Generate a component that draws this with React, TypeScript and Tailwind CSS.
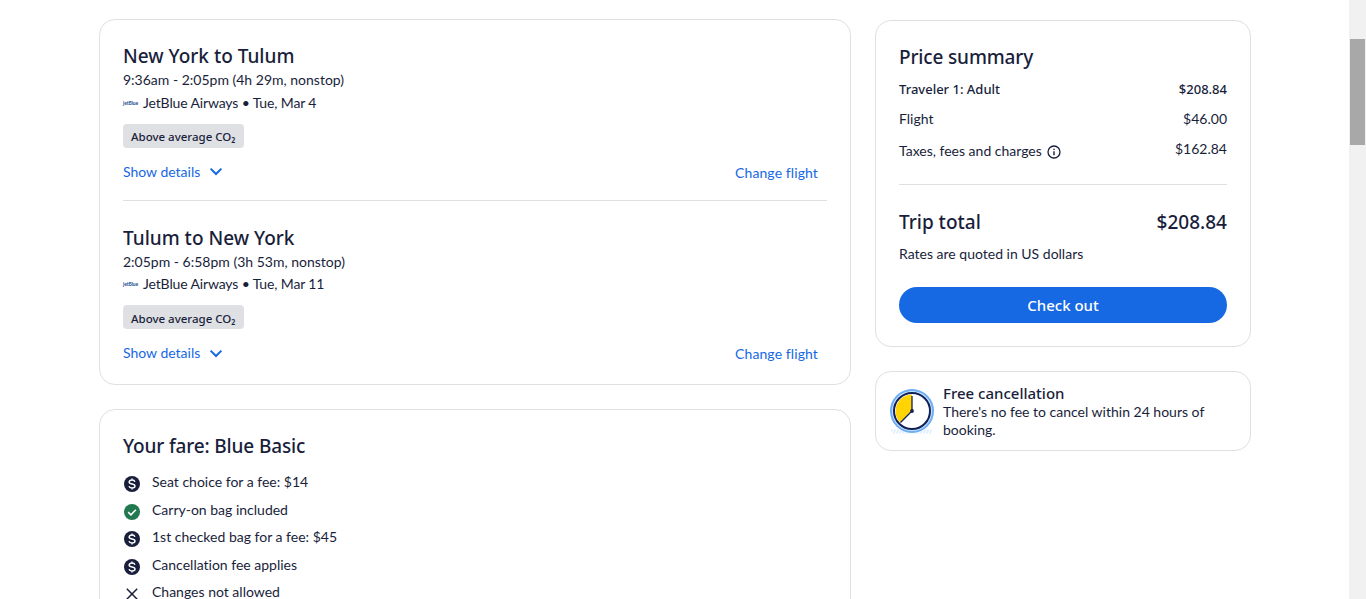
import React from "react";

const head = "font-['Noto_Sans',sans-serif] font-medium";

const Dollar = () => (
  <svg width="16" height="16" viewBox="0 0 16 16" className="shrink-0">
    <circle cx="8" cy="8" r="8" fill="#191e3b" />
    <path d="M10.9 5.9C10.6 4.6 9.4 4 8 4c-1.7 0-2.9.8-2.9 2 0 2.7 5.9 1.3 5.9 4 0 1.2-1.3 2-3 2-1.6 0-2.7-.7-3-1.9M8 2.4V4M8 12v1.6" fill="none" stroke="#fff" strokeWidth="1.4" />
  </svg>
);
const Check = () => (
  <svg width="16" height="16" viewBox="0 0 16 16" className="shrink-0">
    <circle cx="8" cy="8" r="8" fill="#227950" />
    <path d="M4.2 8.2l2.7 2.6 5-5" fill="none" stroke="#fff" strokeWidth="1.6" />
  </svg>
);
const Cross = () => (
  <svg width="16" height="16" viewBox="0 0 16 16" className="shrink-0">
    <path d="M2.8 2.8l10.4 10.4M13.2 2.8L2.8 13.2" fill="none" stroke="#191e3b" strokeWidth="1.5" />
  </svg>
);
const Chevron = () => (
  <svg width="14" height="9" viewBox="0 0 14 9" className="shrink-0">
    <path d="M1.6 1.6L7 7l5.4-5.4" fill="none" stroke="#1668e3" strokeWidth="2" />
  </svg>
);

function Flight(props: { title: string; time: string; date: string }) {
  return (
    <div>
      <h2 className={`${head} text-[19px] leading-[26px]`}>{props.title}</h2>
      <div className="text-[14px] leading-[20px] mt-[1px]">{props.time}</div>
      <div className="flex items-center text-[14px] leading-[20px] mt-[2.5px]">
        <span className="w-[20px] text-[5px] leading-[20px] font-bold text-[#1d4f91] tracking-[-0.1px]">jetBlue</span>
        <span className="tracking-[-0.14px]">JetBlue Airways • {props.date}</span>
      </div>
      <div className={`${head} mt-[11px] flex w-fit h-[24px] items-center rounded-[4px] bg-[#dfe0e4] px-[8px] pt-[3px] text-[11.5px]`}>
        Above average CO₂
      </div>
      <div className="flex items-center justify-between mt-[13px] pr-[9px] text-[14px] leading-[20px] text-[#1668e3]">
        <div className="flex items-center gap-[9px]">
          <span>Show details</span>
          <Chevron />
        </div>
        <span className="mt-[2px] tracking-[0.1px]">Change flight</span>
      </div>
    </div>
  );
}

function Fare(props: { icon: React.ReactNode; text: string }) {
  return (
    <div className="flex items-center gap-[12px] h-[20px] pl-px">
      <span className="mt-[4px]">{props.icon}</span>
      <span>{props.text}</span>
    </div>
  );
}

export default function App() {
  return (
    <div className="flex h-[599px] overflow-hidden bg-white text-[#191e3b] font-['Lato',sans-serif] [font-variant-ligatures:none]">
      <main className="flex-1 flex items-start gap-[24px] pl-[99px] pt-[19px]">
        <div className="w-[752px] shrink-0 flex flex-col gap-[24px]">
          <section className="h-[366px] rounded-[16px] border border-[#dfe0e4] px-[23px] pt-[23px]">
            <Flight title="New York to Tulum" time="9:36am - 2:05pm (4h 29m, nonstop)" date="Tue, Mar 4" />
            <div className="h-px bg-[#dfe0e4] mt-[17px] mb-[24px]" />
            <Flight title="Tulum to New York" time="2:05pm - 6:58pm (3h 53m, nonstop)" date="Tue, Mar 11" />
          </section>
          <section className="h-[300px] rounded-[16px] border border-[#dfe0e4] px-[23px] pt-[23px]">
            <h2 className={`${head} text-[19px] leading-[26px] tracking-[-0.15px]`}>Your fare: Blue Basic</h2>
            <div className="mt-[13px] flex flex-col gap-[7.5px] text-[14px] leading-[20px]">
              <Fare icon={<Dollar />} text="Seat choice for a fee: $14" />
              <Fare icon={<Check />} text="Carry-on bag included" />
              <Fare icon={<Dollar />} text="1st checked bag for a fee: $45" />
              <Fare icon={<Dollar />} text="Cancellation fee applies" />
              <Fare icon={<Cross />} text="Changes not allowed" />
            </div>
          </section>
        </div>

        <aside className="w-[376px] shrink-0 flex flex-col gap-[24px] pt-[1px]">
          <section className="h-[327px] rounded-[16px] border border-[#dfe0e4] px-[23px] pt-[23px]">
            <h2 className={`${head} text-[19px] leading-[26px] tracking-[-0.15px]`}>Price summary</h2>
            <div className="mt-[9px] text-[14px] leading-[20px]">
              <div className={`${head} text-[13px] flex justify-between`}>
                <span>Traveler 1: Adult</span>
                <span>$208.84</span>
              </div>
              <div className="flex justify-between mt-[10px]">
                <span>Flight</span>
                <span>$46.00</span>
              </div>
              <div className="flex justify-between mt-[10px]">
                <span className="flex items-center gap-[5px] mt-[2px]">
                  Taxes, fees and charges
                  <svg width="14" height="14" viewBox="0 0 14 14" className="mt-[2px]">
                    <circle cx="7" cy="7" r="6" fill="none" stroke="#191e3b" strokeWidth="1.3" />
                    <path d="M7 6.2v4M7 3.7v1.3" stroke="#191e3b" strokeWidth="1.4" />
                  </svg>
                </span>
                <span>$162.84</span>
              </div>
            </div>
            <div className="h-px bg-[#dfe0e4] mt-[23px]" />
            <div className={`${head} flex justify-between mt-[24px] text-[19px] leading-[26px]`}>
              <span>Trip total</span>
              <span>$208.84</span>
            </div>
            <div className="mt-[9px] text-[14px] leading-[20px]">Rates are quoted in US dollars</div>
            <button className={`${head} mt-[23px] w-full h-[36px] rounded-full bg-[#1668e3] text-white text-[15px]`}>Check out</button>
          </section>
          <section className="h-[80px] rounded-[16px] border border-[#dfe0e4] flex items-start pl-[12px] pr-[24px] pt-[12px]">
            <svg width="48" height="48" viewBox="0 0 48 48" className="shrink-0 mt-[3px]">
              <path d="M3 43.5h42M5 45.5h38" stroke="#e2effd" strokeWidth="2" strokeDasharray="2 1" />
              <circle cx="24" cy="24" r="22" fill="#6eaef2" />
              <circle cx="24" cy="24" r="20" fill="#cbe2fb" />
              <circle cx="24" cy="24" r="18" fill="#fff" stroke="#10205a" strokeWidth="2" />
              <path d="M24 7.5A16.5 16.5 0 0 0 12.3 35.7L24 24z" fill="#ffd400" />
              <path d="M24 9v15L12.5 35.5" fill="none" stroke="#10205a" strokeWidth="1.3" />
              <circle cx="24" cy="24" r="1.9" fill="#10205a" />
            </svg>
            <div className="ml-[7px] -mt-[1px] text-[14px] leading-[18px]">
              <div className={`${head} text-[15px] leading-[20px]`}>Free cancellation</div>
              <div>There's no fee to cancel within 24 hours of booking.</div>
            </div>
          </section>
        </aside>
      </main>
      <div className="w-[17px] shrink-0 bg-[#f1f1f1] flex flex-col">
        <div className="h-[39px]" />
        <div className="h-[106px] bg-[#a8a8a8] mx-px w-[15px]" />
      </div>
    </div>
  );
}
